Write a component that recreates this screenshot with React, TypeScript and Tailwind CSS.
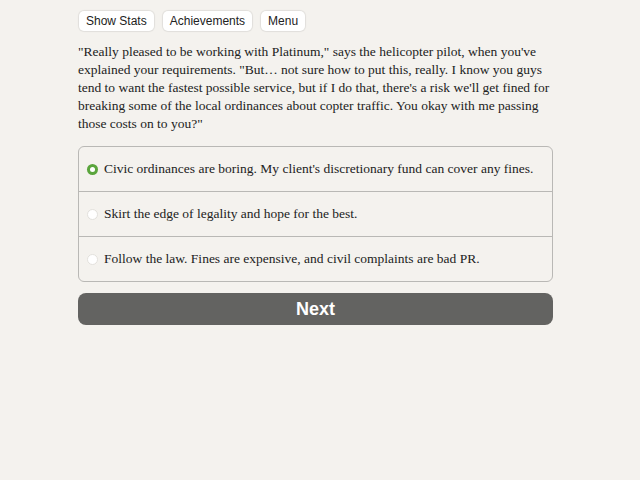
import React, { useState } from "react";

const choices = [
  "Civic ordinances are boring. My client's discretionary fund can cover any fines.",
  "Skirt the edge of legality and hope for the best.",
  "Follow the law. Fines are expensive, and civil complaints are bad PR.",
];

const serif = "font-['Palatino_Linotype','Book_Antiqua','Liberation_Serif',serif]";

export default function App() {
  const [picked, setPicked] = useState(0);

  return (
    <div className="min-h-[480px] w-full bg-[#f4f2ee] text-[#222]">
      <div className="ml-[78px] w-[475px] pt-[11px]">
        {/* Top buttons */}
        <div className="flex gap-[9px] pl-[1px] font-['Liberation_Sans',sans-serif] text-[12px]">
          {["Show Stats", "Achievements", "Menu"].map((b) => (
            <button
              key={b}
              className="h-[20px] rounded-[5px] bg-white px-[7px] leading-[20px] text-[#222] shadow-[0_0_1px_1px_rgba(0,0,0,0.08)]"
            >
              {b}
            </button>
          ))}
        </div>

        {/* Story text */}
        <p className={`${serif} mt-[12px] text-[13.5px] leading-[18px]`}>
          "Really pleased to be working with Platinum," says the helicopter pilot, when you've
          explained your requirements. "But… not sure how to put this, really. I know you guys
          tend to want the fastest possible service, but if I do that, there's a risk we'll get
          fined for breaking some of the local ordinances about copter traffic. You okay with me
          passing those costs on to you?"
        </p>

        {/* Choices */}
        <div className="mt-[13px] overflow-hidden rounded-[6px] border border-[#b9b8b5]">
          {choices.map((c, i) => (
            <label
              key={i}
              onClick={() => setPicked(i)}
              className={`${serif} flex cursor-pointer items-center gap-[6px] pl-[8px] text-[13.5px] ${
                i > 0 ? "h-[45px] border-t border-[#b9b8b5]" : "h-[44px]"
              }`}
            >
              {picked === i ? (
                <span className="flex h-[11px] w-[11px] items-center justify-center rounded-full bg-[#5aa53c]">
                  <span className="h-[5px] w-[5px] rounded-full bg-white" />
                </span>
              ) : (
                <span className="h-[11px] w-[11px] rounded-full border border-[#e2e0dc] bg-white" />
              )}
              <span>{c}</span>
            </label>
          ))}
        </div>

        {/* Next */}
        <button className="mt-[11px] h-[32px] w-full rounded-[8px] bg-[#636361] font-['Liberation_Sans',sans-serif] text-[18px] font-bold text-white">
          Next
        </button>
      </div>
    </div>
  );
}
